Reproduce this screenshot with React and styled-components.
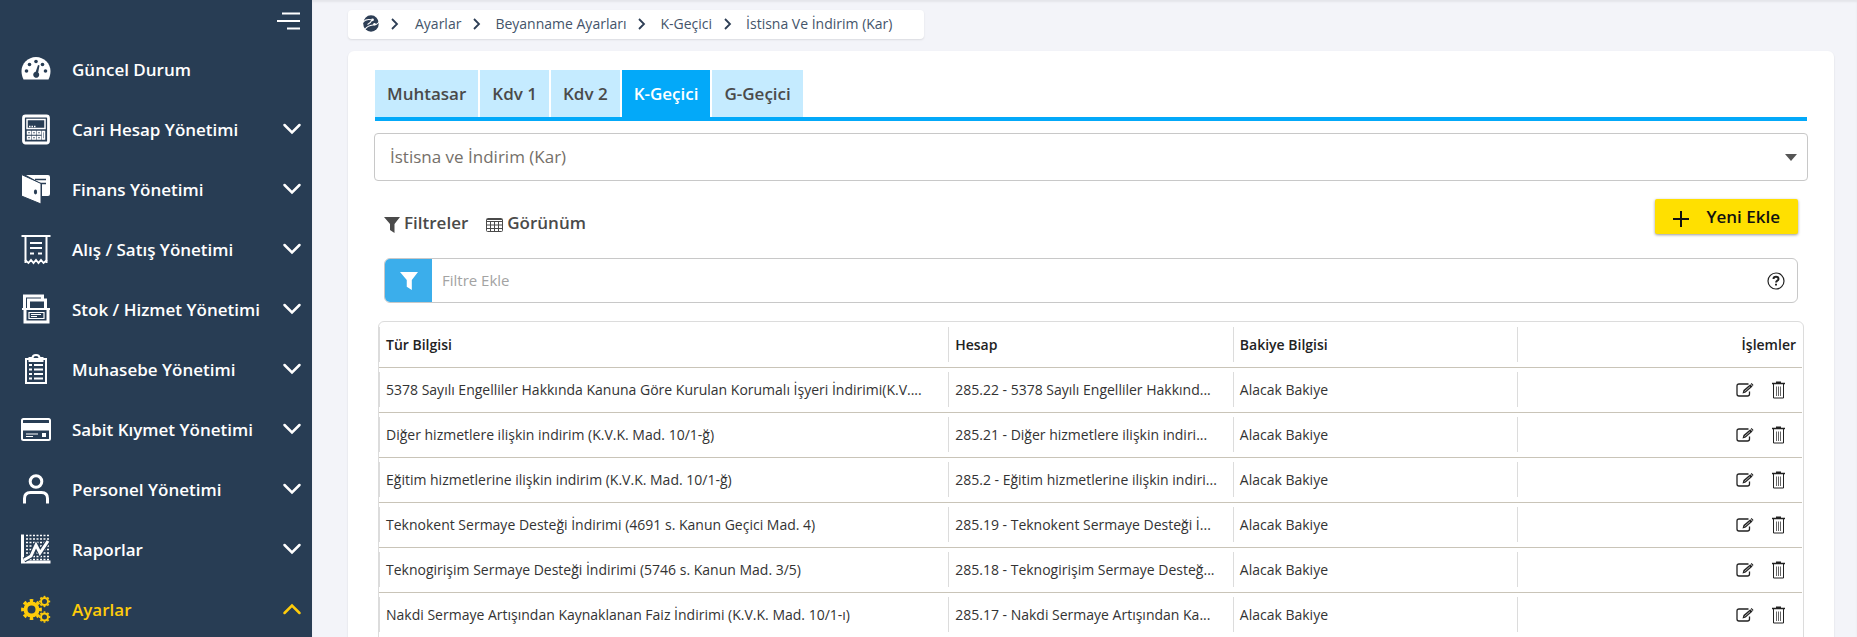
import React, { useState } from 'react';
import styled, { createGlobalStyle, css } from 'styled-components';

const GlobalStyle = createGlobalStyle`
  * {
    box-sizing: border-box;
  }

  body {
    margin: 0;
    background: #f3f4f9;
    font-family: 'Open Sans', 'Noto Sans', sans-serif;
    overflow: hidden;
  }

  button,
  input,
  select {
    font-family: inherit;
  }
`;

const Page = styled.div`
  display: flex;
  height: 100vh;
  overflow: hidden;
`;

const Sidebar = styled.aside`
  flex: 0 0 312px;
  background: #283d54;
  color: #fff;
`;

const SidebarTop = styled.div`
  display: flex;
  justify-content: flex-end;
  height: 39px;
  padding: 12px 12px 0 0;
`;

const IconButton = styled.button`
  display: flex;
  align-items: center;
  justify-content: center;
  height: 18px;
  padding: 0;
  border: none;
  background: none;
  color: inherit;
  cursor: pointer;
`;

const Menu = styled.ul`
  margin: 0;
  padding: 0;
  list-style: none;
`;

const MenuButton = styled.button`
  display: flex;
  align-items: center;
  width: 100%;
  height: 60px;
  padding: 0 10px 0 20px;
  border: none;
  background: none;
  color: ${(props) => (props.$active ? '#ffcc0a' : '#fff')};
  font-size: 17px;
  font-weight: 600;
  text-align: left;
  cursor: pointer;
`;

const MenuIcon = styled.span`
  display: flex;
  flex: 0 0 52px;
`;

const MenuLabel = styled.span`
  flex: 1;
`;

const Content = styled.main`
  flex: 1;
  min-width: 0;
  padding: 10px 23px 0 36px;
  box-shadow: inset 0 2px 2px #e4e5ea;
`;

const Breadcrumb = styled.nav`
  display: inline-flex;
  align-items: center;
  height: 29px;
  padding: 0 32px 2px 15px;
  border-radius: 4px;
  background: #fff;
  box-shadow: 0 1px 2px rgba(0, 0, 0, 0.1);
  color: #2d3e55;
  font-size: 14px;
  vertical-align: top;
`;

const Crumb = styled.a`
  display: flex;
  align-items: center;
  color: #44546a;
  text-decoration: none;
`;

const Separator = styled.svg`
  margin: 0 ${(props) => (props.$first ? 16 : 14)}px 0 12px;
`;

const Card = styled.section`
  min-height: 700px;
  margin-top: 12px;
  padding: 19px 26px 0;
  border-radius: 6px;
  background: #fff;
  box-shadow: 0 1px 2px rgba(0, 0, 0, 0.12);
`;

const Tabs = styled.div`
  display: flex;
  gap: 2px;
  margin: 0 1px;
  border-bottom: 4px solid #03a9f9;
`;

const Tab = styled.button`
  height: 47px;
  padding: 0 12px;
  border: none;
  background: ${(props) => (props.$active ? '#03a9f9' : '#c5ebff')};
  color: ${(props) => (props.$active ? '#fff' : '#4a4a4a')};
  font-size: 17px;
  font-weight: 600;
  cursor: pointer;
`;

const SelectBox = styled.div`
  display: grid;
  align-items: center;
  margin-top: 12px;

  > * {
    grid-area: 1 / 1;
  }

  svg {
    justify-self: end;
    margin-right: 11px;
    pointer-events: none;
  }
`;

const Select = styled.select`
  width: 100%;
  height: 48px;
  padding: 0 15px 2px;
  border: 1px solid #c8c8c8;
  border-radius: 4px;
  background: #fff;
  color: #757069;
  font-size: 17px;
  appearance: none;
`;

const Panel = styled.div`
  padding: 18px 10px 0;
`;

const Toolbar = styled.div`
  display: flex;
  align-items: flex-start;
  gap: 18px;
`;

const ToolButton = styled.button`
  display: flex;
  align-items: center;
  gap: 4px;
  height: 47px;
  padding: 0;
  border: none;
  background: none;
  color: #4a4a4a;
  font-size: 17px;
  font-weight: 600;
  cursor: pointer;

  svg {
    margin-top: 4px;
  }
`;

const AddButton = styled.button`
  display: flex;
  align-items: center;
  gap: 17px;
  height: 35px;
  margin-left: auto;
  padding: 0 18px;
  border: none;
  border-radius: 2px;
  background: #ffe000;
  box-shadow: 0 1px 3px rgba(0, 0, 0, 0.4);
  color: #111;
  font-size: 17px;
  font-weight: 600;
  cursor: pointer;

  svg {
    margin-top: 4px;
  }
`;

const FilterBar = styled.div`
  display: flex;
  align-items: center;
  height: 45px;
  margin-top: 12px;
  border: 1px solid #c8c8c8;
  border-radius: 6px;
  overflow: hidden;

  > ${IconButton} {
    margin-right: 12px;
  }
`;

const FilterButton = styled.button`
  display: flex;
  align-items: center;
  justify-content: center;
  width: 47px;
  height: 100%;
  padding: 0;
  border: none;
  background: #3baeeb;
  cursor: pointer;
`;

const FilterInput = styled.input`
  flex: 1;
  height: 100%;
  padding: 0 10px 2px;
  border: none;
  outline: none;
  background: none;
  color: #333;
  font-size: 15px;

  &::placeholder {
    color: #a3a3a3;
    opacity: 1;
  }
`;

const Grid = styled.div`
  margin: 18px 4px 0;
  padding-right: 1px;
  border: 1px solid #dcdcdc;
  border-radius: 6px 6px 0 0;
  overflow: hidden;
`;

const Table = styled.table`
  width: 100%;
  table-layout: fixed;
  border-collapse: collapse;
  color: #333;
  font-size: 14px;
`;

const cell = css`
  height: 45px;
  padding: 0 6px 0 7px;
  border-bottom: 1px solid #c9c4b8;
  background: ${(props) =>
    props.$last
      ? 'none'
      : 'linear-gradient(#dcdcdc, #dcdcdc) left center / 1px 35px no-repeat'};
  text-align: left;
  white-space: nowrap;
  overflow: hidden;
  text-overflow: ellipsis;
`;

const HeadCell = styled.th`
  ${cell}
  color: #222;
  font-weight: 600;
  text-align: ${(props) => (props.$last ? 'right' : 'left')};
`;

const Cell = styled.td`
  ${cell}
`;

const Actions = styled.div`
  display: flex;
  justify-content: flex-end;
  gap: 18px;
  padding-right: 11px;
  color: #222;
`;

const ICONS = {
  gauge: (
    <>
      <path
        fill="currentColor"
        d="M15 3C7 3 .5 9.500.5 17c0 3.500 1 6.500 2 8.500h25c1-2 2-5 2-8.500C29.500 9.500 23 3 15 3z"
      />
      <g fill="#283d54">
        <circle cx="5.500" cy="17" r="1.800" />
        <circle cx="8.500" cy="10.500" r="1.800" />
        <circle cx="15" cy="7.500" r="1.800" />
        <circle cx="21.500" cy="10.500" r="1.800" />
        <circle cx="24.500" cy="17" r="1.800" />
        <path d="M17 11l1.500.4-1.300 7.100a3 3 0 1 1-2.500-.7z" />
      </g>
    </>
  ),
  calculator: (
    <>
      <rect x="2.500" y="2" width="25" height="27" rx="2" fill="none" stroke="currentColor" strokeWidth="2.800" />
      <path d="M6 5.500h18v9H6z" fill="none" stroke="currentColor" strokeWidth="1.500" />
      <path d="M8 12.500h7" stroke="currentColor" strokeWidth="1.500" strokeDasharray="1.500 1" />
      <g fill="none" stroke="currentColor" strokeWidth="1.500">
        <path d="M6.500 17.500h3v2.500h-3zM11.500 17.500h3v2.500h-3zM16.500 17.500h3v2.500h-3zM6.500 22.500h3v2.500h-3zM11.500 22.500h3v2.500h-3zM16.500 22.500h3v2.500h-3zM21.500 17.500h2v7.500h-2z" />
      </g>
    </>
  ),
  wallet: (
    <>
      <path fill="currentColor" d="M5 1h22q2 0 2 2v17q0 2-2 2h-6V10z" />
      <path d="M14 5.500h11M18 9.500h7" stroke="#283d54" strokeWidth="1.500" />
      <path fill="currentColor" stroke="#283d54" d="M.5.500L20 9.500V30L.5 22z" />
      <ellipse cx="14.500" cy="18" rx="1.600" ry="2.400" fill="#283d54" />
    </>
  ),
  receipt: (
    <>
      <path d="M.5 2h29M4.500 2v27M25.500 2v27" stroke="currentColor" strokeWidth="2" />
      <path
        d="M4 26l3.500 3 2.500-3 2.500 3 2.500-3 2.500 3 2.500-3 2.500 3 3.500-3"
        fill="none"
        stroke="currentColor"
        strokeWidth="1.800"
      />
      <path d="M9 9h12M9 14h12M9 19.500h4M17 19.500h4" stroke="currentColor" strokeWidth="1.800" />
    </>
  ),
  stock: (
    <>
      <path d="M3.500 14V2h18v3M7.500 14V6h17v8" fill="none" stroke="currentColor" strokeWidth="3" />
      <path d="M1 15h28" stroke="currentColor" strokeWidth="2" />
      <path d="M4 15v13h23V15" fill="none" stroke="currentColor" strokeWidth="3" />
      <path d="M8 18.500h15v6H8zM10 20.500h10M10 22.500h6" fill="none" stroke="currentColor" strokeWidth="1.200" />
    </>
  ),
  clipboard: (
    <>
      <rect x="5" y="5" width="20" height="24" fill="none" stroke="currentColor" strokeWidth="2" />
      <path d="M8.500 7V4h3q0-3 3.500-3t3.500 3h3v3z" fill="none" stroke="currentColor" strokeWidth="2" />
      <path
        d="M8 11h3M13 11h9M8 15.500h3M13 15.500h9M8 20h3M13 20h9M8 24.500h3M13 24.500h9"
        stroke="currentColor"
        strokeWidth="1.800"
      />
    </>
  ),
  card: (
    <>
      <rect x="1" y="5" width="28" height="21" rx="1.500" fill="none" stroke="currentColor" strokeWidth="2" />
      <path d="M2 9h26v7.500H2z" fill="currentColor" />
      <path d="M5 20h12M5 22.500h7" stroke="currentColor" strokeWidth="1.200" />
      <path d="M21 19h4v4h-4z" fill="currentColor" />
    </>
  ),
  user: (
    <g fill="none" stroke="currentColor" strokeWidth="3">
      <circle cx="15" cy="7.500" r="5.800" />
      <path d="M3.500 29.500v-5q0-6 6-6h11q6 0 6 6v5" />
    </g>
  ),
  chart: (
    <>
      <path
        d="M5 1.500h24M5 5h24M5 8.500h24M5 12h24M5 15.500h24M5 19h24M5 22.500h24M5 25.500h24"
        stroke="currentColor"
        strokeWidth="1.600"
        strokeDasharray="2 1.500"
      />
      <path d="M1.500.5v27.500H29.500" fill="none" stroke="currentColor" strokeWidth="3" />
      <path d="M3 26l7-4 5-11 4 8 8-12" fill="none" stroke="#283d54" strokeWidth="5" />
      <path d="M3 26l7-4 5-11 4 8 8-12" fill="none" stroke="currentColor" strokeWidth="3" />
    </>
  ),
};

const gear = (cx, cy, r, width) => (
  <g fill="none" stroke="currentColor">
    <circle cx={cx} cy={cy} r={r} strokeWidth={width} />
    <circle
      cx={cx}
      cy={cy}
      r={r + width * 0.75}
      strokeWidth={width * 0.7}
      pathLength="16"
      strokeDasharray="1 1"
      strokeDashoffset="0.5"
    />
  </g>
);

ICONS.gears = (
  <>
    {gear(10.5, 15.5, 6, 4)}
    {gear(23.5, 7.5, 3.5, 2)}
    {gear(23.5, 23, 3.5, 2)}
  </>
);

const MenuGlyph = ({ name }) => (
  <svg width="32" height="32" viewBox="-1 -1 32 32" aria-hidden="true">
    {ICONS[name]}
  </svg>
);

const Chevron = ({ up }) => (
  <svg width="20" height="12" viewBox="0 0 20 12" aria-hidden="true">
    <path
      d={up ? 'M2.500 10L10 2.500L17.500 10' : 'M2.500 2L10 9.500L17.500 2'}
      fill="none"
      stroke="currentColor"
      strokeWidth="2.500"
      strokeLinecap="round"
    />
  </svg>
);

const Funnel = ({ size = 16, color = 'currentColor' }) => (
  <svg width={size} height={size} viewBox="0 0 16 16" aria-hidden="true">
    <path d="M0 0h16L10.500 7v9L6 13V7z" fill={color} />
  </svg>
);

const TableIcon = () => (
  <svg width="17" height="14" viewBox="0 0 17 14" aria-hidden="true">
    <path
      d="M1.500.5h14q1 0 1 1v11q0 1-1 1h-14q-1 0-1-1v-11q0-1 1-1zM.5 3.500h16M.5 7h16M.5 10.500h16M4.500 3v10.500M8.500 3v10.500M12.500 3v10.500M1 1.500h15"
      fill="none"
      stroke="currentColor"
    />
  </svg>
);

const EditIcon = () => (
  <svg width="18" height="16" viewBox="0 0 18 16" aria-hidden="true">
    <path
      d="M12.500 2H3Q1 2 1 4v8q0 2 2 2h8.500q2 0 2-2V9.500"
      fill="none"
      stroke="currentColor"
      strokeWidth="1.300"
    />
    <path d="M6.500 11.500l1-3.500 6.800-5.800 2.200 2.400-6.800 5.900z" fill="currentColor" />
    <path d="M14.800 1.800l.8-.7 1.900 2-.8.8z" fill="currentColor" />
    <path d="M8.500 9.500l5.500-4.800" stroke="#fff" strokeWidth="0.700" />
  </svg>
);

const TrashIcon = () => (
  <svg width="13" height="18" viewBox="0 0 13 18" aria-hidden="true">
    <path d="M0 2.500h13M4 1.200h5" stroke="currentColor" strokeWidth="1.500" />
    <path d="M1.500 3v14h10V3" fill="none" stroke="currentColor" />
    <path d="M4.500 5.500v9.500M6.500 5.500v9.500M8.500 5.500v9.500" stroke="currentColor" strokeWidth="0.700" />
  </svg>
);

const Logo = () => (
  <svg width="16" height="17" viewBox="0 0 16 17" aria-hidden="true">
    <ellipse cx="8" cy="8.500" rx="7.800" ry="8.300" fill="#2d3e55" />
    <path
      d="M-.5 7.500Q3 3.500 8 4.800M2 14.500Q4.500 10.500 10 10q4 0 6.500-3.500M4.500 9.500q3-1.200 4.500-4.500"
      fill="none"
      stroke="#fff"
      strokeWidth="1.100"
    />
    <circle cx="9.500" cy="4.800" r="1.400" fill="#fff" />
    <circle cx="11.500" cy="9.300" r="1.300" fill="#fff" />
  </svg>
);

const menuItems = [
  { icon: 'gauge', label: 'Güncel Durum', leaf: true },
  { icon: 'calculator', label: 'Cari Hesap Yönetimi' },
  { icon: 'wallet', label: 'Finans Yönetimi' },
  { icon: 'receipt', label: 'Alış / Satış Yönetimi' },
  { icon: 'stock', label: 'Stok / Hizmet Yönetimi' },
  { icon: 'clipboard', label: 'Muhasebe Yönetimi' },
  { icon: 'card', label: 'Sabit Kıymet Yönetimi' },
  { icon: 'user', label: 'Personel Yönetimi' },
  { icon: 'chart', label: 'Raporlar' },
  { icon: 'gears', label: 'Ayarlar' },
];

const crumbs = ['Ayarlar', 'Beyanname Ayarları', 'K-Geçici', 'İstisna Ve İndirim (Kar)'];

const tabs = ['Muhtasar', 'Kdv 1', 'Kdv 2', 'K-Geçici', 'G-Geçici'];

const rows = [
  {
    type: '5378 Sayılı Engelliler Hakkında Kanuna Göre Kurulan Korumalı İşyeri İndirimi(K.V....',
    account: '285.22 - 5378 Sayılı Engelliler Hakkınd...',
    balance: 'Alacak Bakiye',
  },
  {
    type: 'Diğer hizmetlere ilişkin indirim (K.V.K. Mad. 10/1-ğ)',
    account: '285.21 - Diğer hizmetlere ilişkin indiri...',
    balance: 'Alacak Bakiye',
  },
  {
    type: 'Eğitim hizmetlerine ilişkin indirim (K.V.K. Mad. 10/1-ğ)',
    account: '285.2 - Eğitim hizmetlerine ilişkin indiri...',
    balance: 'Alacak Bakiye',
  },
  {
    type: 'Teknokent Sermaye Desteği İndirimi (4691 s. Kanun Geçici Mad. 4)',
    account: '285.19 - Teknokent Sermaye Desteği İ...',
    balance: 'Alacak Bakiye',
  },
  {
    type: 'Teknogirişim Sermaye Desteği İndirimi (5746 s. Kanun Mad. 3/5)',
    account: '285.18 - Teknogirişim Sermaye Desteğ...',
    balance: 'Alacak Bakiye',
  },
  {
    type: 'Nakdi Sermaye Artışından Kaynaklanan Faiz İndirimi (K.V.K. Mad. 10/1-ı)',
    account: '285.17 - Nakdi Sermaye Artışından Ka...',
    balance: 'Alacak Bakiye',
  },
];

const App = () => {
  const [activeMenu, setActiveMenu] = useState('Ayarlar');
  const [activeTab, setActiveTab] = useState('K-Geçici');
  const [filter, setFilter] = useState('');

  return (
    <Page>
      <GlobalStyle />
      <Sidebar>
        <SidebarTop>
          <IconButton aria-label="Menü">
            <svg width="23" height="18" viewBox="0 0 23 18">
              <path d="M5 1.500h18M0 9h23M10 16.500h13" stroke="currentColor" strokeWidth="2" />
            </svg>
          </IconButton>
        </SidebarTop>
        <Menu>
          {menuItems.map((item) => (
            <li key={item.label}>
              <MenuButton
                $active={item.label === activeMenu}
                onClick={() => setActiveMenu(item.label)}
              >
                <MenuIcon>
                  <MenuGlyph name={item.icon} />
                </MenuIcon>
                <MenuLabel>{item.label}</MenuLabel>
                {!item.leaf && <Chevron up={item.label === activeMenu} />}
              </MenuButton>
            </li>
          ))}
        </Menu>
      </Sidebar>

      <Content>
        <Breadcrumb aria-label="Konum">
          <Crumb href="#" aria-label="Ana sayfa">
            <Logo />
          </Crumb>
          {crumbs.map((crumb, index) => (
            <React.Fragment key={crumb}>
              <Separator $first={index === 0} width="8" height="12" viewBox="0 0 8 12">
                <path d="M1 1l5 5-5 5" fill="none" stroke="currentColor" strokeWidth="1.800" />
              </Separator>
              <Crumb href="#">{crumb}</Crumb>
            </React.Fragment>
          ))}
        </Breadcrumb>

        <Card>
          <Tabs role="tablist">
            {tabs.map((tab) => (
              <Tab
                key={tab}
                role="tab"
                aria-selected={tab === activeTab}
                $active={tab === activeTab}
                onClick={() => setActiveTab(tab)}
              >
                {tab}
              </Tab>
            ))}
          </Tabs>

          <SelectBox>
            <Select aria-label="Beyanname türü" defaultValue="kar">
              <option value="kar">İstisna ve İndirim (Kar)</option>
            </Select>
            <svg width="12" height="7" viewBox="0 0 12 7" aria-hidden="true">
              <path d="M0 0h12L6 7z" fill="#555" />
            </svg>
          </SelectBox>

          <Panel>
            <Toolbar>
              <ToolButton>
                <Funnel />
                Filtreler
              </ToolButton>
              <ToolButton>
                <TableIcon />
                Görünüm
              </ToolButton>
              <AddButton>
                <svg width="16" height="16" viewBox="0 0 16 16" aria-hidden="true">
                  <path d="M8 0v16M0 8h16" stroke="currentColor" strokeWidth="2" />
                </svg>
                Yeni Ekle
              </AddButton>
            </Toolbar>

            <FilterBar>
              <FilterButton aria-label="Filtrele">
                <Funnel size={18} color="#fff" />
              </FilterButton>
              <FilterInput
                type="text"
                aria-label="Filtre Ekle"
                placeholder="Filtre Ekle"
                value={filter}
                onChange={(e) => setFilter(e.target.value)}
              />
              <IconButton aria-label="Yardım">
                <svg width="18" height="18" viewBox="0 0 18 18">
                  <circle cx="9" cy="9" r="8" fill="none" stroke="#222" strokeWidth="1.200" />
                  <path
                    d="M6.500 7q0-2.200 2.500-2.200T11.500 7q0 1-1.200 1.700T9.100 10.500"
                    fill="none"
                    stroke="#222"
                    strokeWidth="2"
                  />
                  <path d="M8 11.700h2v1.800H8z" fill="#222" />
                </svg>
              </IconButton>
            </FilterBar>
          </Panel>

          <Grid>
            <Table>
              <colgroup>
                <col style={{ width: '40%' }} />
                <col style={{ width: '20%' }} />
                <col style={{ width: '20%' }} />
                <col style={{ width: '10%' }} />
                <col style={{ width: '10%' }} />
              </colgroup>
              <thead>
                <tr>
                  <HeadCell>Tür Bilgisi</HeadCell>
                  <HeadCell>Hesap</HeadCell>
                  <HeadCell>Bakiye Bilgisi</HeadCell>
                  <HeadCell />
                  <HeadCell $last>İşlemler</HeadCell>
                </tr>
              </thead>
              <tbody>
                {rows.map((row) => (
                  <tr key={row.account}>
                    <Cell>{row.type}</Cell>
                    <Cell>{row.account}</Cell>
                    <Cell>{row.balance}</Cell>
                    <Cell />
                    <Cell $last>
                      <Actions>
                        <IconButton aria-label="Düzenle">
                          <EditIcon />
                        </IconButton>
                        <IconButton aria-label="Sil">
                          <TrashIcon />
                        </IconButton>
                      </Actions>
                    </Cell>
                  </tr>
                ))}
              </tbody>
            </Table>
          </Grid>
        </Card>
      </Content>
    </Page>
  );
};

export default App;
